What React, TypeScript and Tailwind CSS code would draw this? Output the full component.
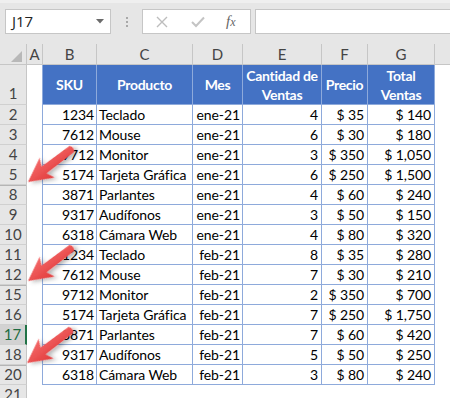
import React from 'react';

type Cell = string;

const rows: { n: number; cells: Cell[]; hiddenBefore?: boolean; selected?: boolean }[] = [
  { n: 2, cells: ['1234', 'Teclado', 'ene-21', '4', '$ 35', '$ 140'] },
  { n: 3, cells: ['7612', 'Mouse', 'ene-21', '6', '$ 30', '$ 180'] },
  { n: 4, cells: ['9712', 'Monitor', 'ene-21', '3', '$ 350', '$ 1,050'] },
  { n: 5, cells: ['5174', 'Tarjeta Gráfica', 'ene-21', '6', '$ 250', '$ 1,500'] },
  { n: 8, cells: ['3871', 'Parlantes', 'ene-21', '4', '$ 60', '$ 240'], hiddenBefore: true },
  { n: 9, cells: ['9317', 'Audífonos', 'ene-21', '3', '$ 50', '$ 150'] },
  { n: 10, cells: ['6318', 'Cámara Web', 'ene-21', '4', '$ 80', '$ 320'] },
  { n: 11, cells: ['1234', 'Teclado', 'feb-21', '8', '$ 35', '$ 280'] },
  { n: 12, cells: ['7612', 'Mouse', 'feb-21', '7', '$ 30', '$ 210'] },
  { n: 15, cells: ['9712', 'Monitor', 'feb-21', '2', '$ 350', '$ 700'], hiddenBefore: true },
  { n: 16, cells: ['5174', 'Tarjeta Gráfica', 'feb-21', '7', '$ 250', '$ 1,750'] },
  { n: 17, cells: ['3871', 'Parlantes', 'feb-21', '7', '$ 60', '$ 420'], selected: true },
  { n: 18, cells: ['9317', 'Audífonos', 'feb-21', '5', '$ 50', '$ 250'] },
  { n: 20, cells: ['6318', 'Cámara Web', 'feb-21', '3', '$ 80', '$ 240'], hiddenBefore: true },
];

// widths of B..G, border included
const cols = [
  { letter: 'B', w: 'w-[54px]', align: 'justify-end pr-[2px]' },
  { letter: 'C', w: 'w-[96px]', align: 'justify-start pl-[2px]' },
  { letter: 'D', w: 'w-[50px]', align: 'justify-end pr-[2px]' },
  { letter: 'E', w: 'w-[79px]', align: 'justify-end pr-[3px]' },
  { letter: 'F', w: 'w-[46px]', align: 'justify-end pr-[3px]' },
  { letter: 'G', w: 'w-[67px]', align: 'justify-end pr-[3px]' },
];

const headers: React.ReactNode[] = [
  'SKU',
  'Producto',
  'Mes',
  <>Cantidad de<br />Ventas</>,
  'Precio',
  <>Total<br />Ventas</>,
];

function TopBar() {
  return (
    <div className="h-[44px] bg-[#e6e6e6] border-t-[3px] border-[#efefef] flex items-start pt-[6px]">
      <div className="ml-[5px] w-[106px] h-[25px] bg-white border border-[#c6c6c6] flex items-center pl-[6px] pr-[6px]">
        <span className="text-[15px] text-[#222] font-['Open_Sans',sans-serif] leading-none">J17</span>
        <svg width="8" height="5" viewBox="0 0 8 5" className="ml-auto">
          <path d="M0 0 L8 0 L4 4.5 Z" fill="#6b6b6b" />
        </svg>
      </div>
      <div className="w-[31px] h-[25px] flex flex-col items-center justify-center gap-[2px]">
        <span className="w-[2px] h-[2px] bg-[#a8a8a8]" />
        <span className="w-[2px] h-[2px] bg-[#a8a8a8]" />
        <span className="w-[2px] h-[2px] bg-[#a8a8a8]" />
      </div>
      <div className="w-[109px] h-[25px] bg-white border border-[#c6c6c6] flex items-center">
        <svg width="12" height="12" viewBox="0 0 12 12" className="ml-[13px]">
          <path d="M1 1 L11 11 M11 1 L1 11" stroke="#bdbdbd" strokeWidth="1.4" />
        </svg>
        <svg width="14" height="12" viewBox="0 0 14 12" className="ml-[23px]">
          <path d="M1 6 L5 10 L13 1.5" stroke="#c4c4c4" strokeWidth="2" fill="none" />
        </svg>
        <span className="ml-[21px] text-[15px] italic text-[#666] font-['Liberation_Serif',serif] leading-none">
          f<span className="text-[12px]">x</span>
        </span>
      </div>
      <div className="ml-[4px] flex-1 h-[25px] bg-white border border-[#c6c6c6] border-r-0" />
    </div>
  );
}

function ColHeader() {
  return (
    <div className="flex h-[21px] bg-[#e6e6e6] border-b border-[#c6c6c6] text-[15px] text-[#444] leading-[20px]">
      <div className="w-[27px] border-r border-[#c6c6c6] relative">
        <svg width="11" height="11" viewBox="0 0 11 11" className="absolute right-[4px] bottom-[2px]">
          <path d="M11 0 L11 11 L0 11 Z" fill="#b8b8b8" />
        </svg>
      </div>
      <div className="w-[16px] border-r border-[#c6c6c6] flex justify-center">A</div>
      {cols.map(c => (
        <div key={c.letter} className={`${c.w} border-r border-[#c6c6c6] flex justify-center`}>
          {c.letter}
        </div>
      ))}
      <div className="flex-1" />
    </div>
  );
}

function RowHead({ n, selected, hiddenBefore, tall }: { n: number; selected?: boolean; hiddenBefore?: boolean; tall?: boolean }) {
  return (
    <div
      className={[
        'w-[27px] border-b border-[#d0d0d0] flex justify-center items-end text-[15px] leading-[19px]',
        selected ? 'bg-[#d2d2d2] text-[#1e6b41] border-r-2 border-r-[#217346]' : 'bg-[#e6e6e6] text-[#444] border-r border-r-[#c6c6c6]',
        hiddenBefore ? 'shadow-[inset_0_1px_0_#b5b5b5]' : '',
        tall ? 'pb-[1px]' : '',
      ].join(' ')}
    >
      {n}
    </div>
  );
}

function HeaderRow() {
  return (
    <div className="flex h-[40px]">
      <RowHead n={1} tall />
      <div className="w-[16px] border-r border-[#8eaadb]" />
      {cols.map((c, i) => (
        <div
          key={c.letter}
          className={`${c.w} bg-[#4472c4] border-r border-b border-[#8eaadb] flex items-center justify-center text-center text-white font-bold text-[14px] tracking-[-0.3px] leading-[19px] whitespace-nowrap`}
        >
          <span>{headers[i]}</span>
        </div>
      ))}
    </div>
  );
}

function DataRow({ r }: { r: (typeof rows)[number] }) {
  return (
    <div className="flex h-[20px]">
      <RowHead n={r.n} selected={r.selected} hiddenBefore={r.hiddenBefore} />
      <div className="w-[16px] border-r border-[#8eaadb]" />
      {cols.map((c, i) => (
        <div
          key={c.letter}
          className={`${c.w} ${c.align} border-r border-b border-[#8eaadb] flex items-end text-[14px] tracking-[-0.1px] leading-[19px] text-black whitespace-nowrap overflow-hidden`}
        >
          {r.cells[i]}
        </div>
      ))}
    </div>
  );
}

function Arrow({ x, y }: { x: number; y: number }) {
  return (
    <g transform={`translate(${x} ${y}) rotate(-37)`} filter="url(#shadow)">
      <path
        d="M0 0 L24 -12.5 L20 -4.2 L55 -3.8 Q58 0 55 3.8 L20 4.2 L24 12.5 Z"
        fill="url(#arrowFill)"
      />
    </g>
  );
}

export default function App() {
  return (
    <div className="relative w-[450px] h-[398px] overflow-hidden bg-white font-['Lato',sans-serif]">
      <TopBar />
      <ColHeader />
      <HeaderRow />
      {rows.map(r => (
        <DataRow key={r.n} r={r} />
      ))}
      <div className="flex h-[20px]">
        <RowHead n={21} />
        <div className="flex-1" />
      </div>

      {/* callout arrows pointing at the hidden rows */}
      <svg width="450" height="398" className="absolute left-0 top-0 pointer-events-none">
        <defs>
          <linearGradient id="arrowFill" x1="0" y1="0" x2="0" y2="1">
            <stop offset="0" stopColor="#f46a6a" />
            <stop offset="1" stopColor="#e23b3b" />
          </linearGradient>
          <filter id="shadow" x="-30%" y="-30%" width="160%" height="160%">
            <feDropShadow dx="2" dy="3" stdDeviation="2" floodColor="#000" floodOpacity="0.3" />
          </filter>
        </defs>
        <Arrow x={28} y={182} />
        <Arrow x={28} y={281} />
        <Arrow x={27} y={363} />
      </svg>
    </div>
  );
}
